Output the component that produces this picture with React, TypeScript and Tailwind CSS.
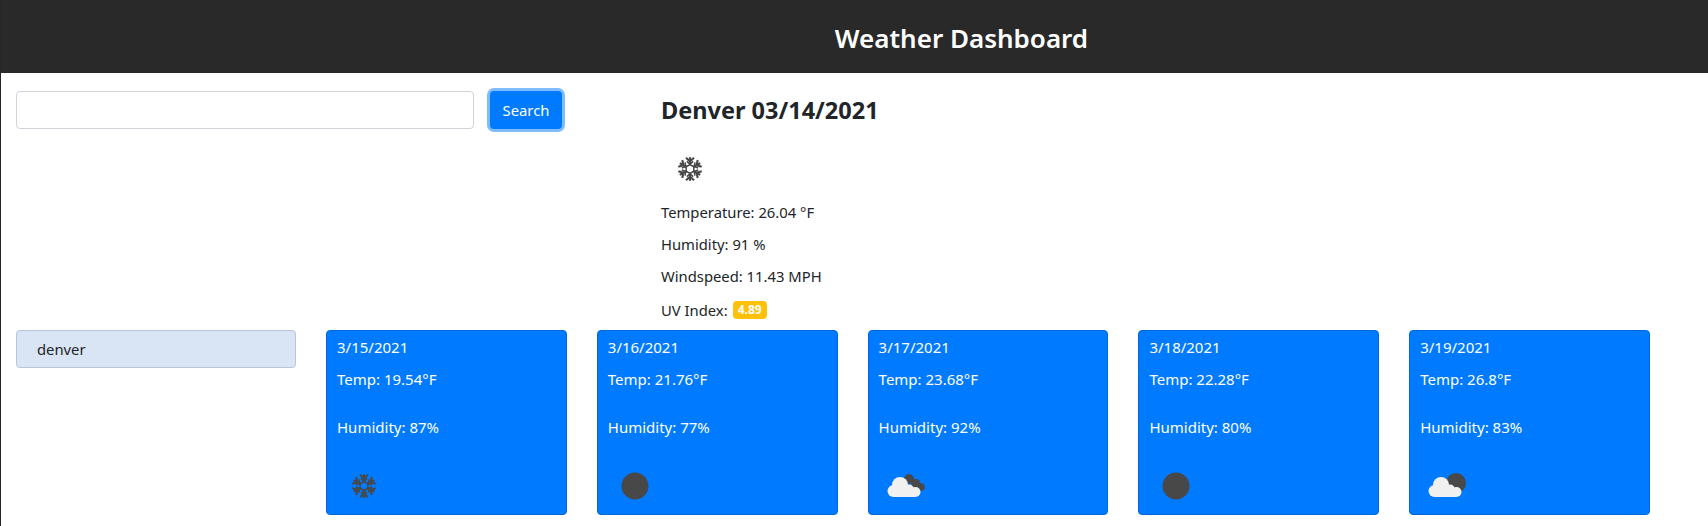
import React from 'react';

type IconKind = 'snow' | 'sun' | 'clouds' | 'partly';

interface Day {
  date: string;
  temp: string;
  humidity: string;
  icon: IconKind;
}

const days: Day[] = [
  { date: '3/15/2021', temp: '19.54', humidity: '87', icon: 'snow' },
  { date: '3/16/2021', temp: '21.76', humidity: '77', icon: 'sun' },
  { date: '3/17/2021', temp: '23.68', humidity: '92', icon: 'clouds' },
  { date: '3/18/2021', temp: '22.28', humidity: '80', icon: 'sun' },
  { date: '3/19/2021', temp: '26.8', humidity: '83', icon: 'partly' },
];

const Cloud = () => (
  <g fill="#f0f0f0">
    <circle cx="12.5" cy="30" r="6" />
    <circle cx="19" cy="24" r="8" />
    <circle cx="28" cy="28.5" r="5" />
    <circle cx="34.5" cy="31" r="5" />
    <rect x="12.5" y="29" width="22" height="7" />
  </g>
);

const WeatherIcon: React.FC<{ kind: IconKind }> = ({ kind }) => {
  if (kind === 'snow') {
    return (
      <svg viewBox="0 0 50 50" className="w-[50px] h-[50px]">
        <g stroke="#484848" strokeWidth="2.1" fill="none">
          <polygon points="25,20.6 28.8,22.8 28.8,27.2 25,29.4 21.2,27.2 21.2,22.8" strokeWidth="1.5" />
          {[0, 60, 120, 180, 240, 300].map((a) => (
            <g key={a} transform={`rotate(${a} 25 25)`}>
              <path d="M25 21 V13.2" />
              <path d="M21 13.8 L25 17.4 L29 13.8" />
              <path d="M21.8 17.4 L25 20.2 L28.2 17.4" strokeWidth="1.5" />
            </g>
          ))}
        </g>
      </svg>
    );
  }
  if (kind === 'sun') {
    return (
      <svg viewBox="0 0 50 50" className="w-[50px] h-[50px]">
        <circle cx="25" cy="25" r="13.5" fill="#484848" />
      </svg>
    );
  }
  if (kind === 'clouds') {
    return (
      <svg viewBox="0 0 50 50" className="w-[50px] h-[50px]">
        <circle cx="28" cy="18" r="5" fill="#484848" />
        <circle cx="35" cy="22.5" r="4.5" fill="#484848" />
        <circle cx="40" cy="26" r="3.8" fill="#484848" />
        <Cloud />
      </svg>
    );
  }
  return (
    <svg viewBox="0 0 50 50" className="w-[50px] h-[50px]">
      <circle cx="34" cy="22" r="10" fill="#484848" />
      <Cloud />
    </svg>
  );
};

const DayCard: React.FC<{ day: Day }> = ({ day }) => (
  <div className="h-[185px] rounded border border-[#0069d9] bg-[#007bff] text-white text-[15px] pl-[10px] pr-3 pt-[4px]">
    <div className="leading-6">{day.date}</div>
    <div className="leading-6 mt-2">Temp: {day.temp}°F</div>
    <div className="leading-6 mt-6">Humidity: {day.humidity}%</div>
    <div className="mt-[22px] ml-[2px]"><WeatherIcon kind={day.icon} /></div>
  </div>
);

export default function App() {
  return (
    <div className="min-h-[526px] bg-white border-l border-[#262626] text-[14.8px] text-[#212529] overflow-hidden font-['Noto_Sans',sans-serif]">
      <header className="h-[73px] bg-[#292929] flex items-center justify-center pl-[214px] pt-[3px]">
        <h1 className="text-[26px] font-semibold text-white">Weather Dashboard</h1>
      </header>

      <div className="flex pt-[18px] pl-[15px]">
        <div className="w-[645px] flex items-start gap-[16px] shrink-0">
          <input className="w-[458px] h-[38px] rounded border border-[#ced4da] bg-white" />
          <button className="h-[38px] w-[72px] rounded bg-[#007bff] text-white ring-[3px] ring-[#007bff]/50">Search</button>
        </div>
        <div>
          <h2 className="text-[23.5px] font-bold leading-[40px] -mt-[1px]">Denver 03/14/2021</h2>
          <div className="mt-[14px] ml-[4px]"><WeatherIcon kind="snow" /></div>
          <p className="leading-6 mt-[6px]">Temperature: 26.04 °F</p>
          <p className="leading-6 mt-2">Humidity: 91 %</p>
          <p className="leading-6 mt-2">Windspeed: 11.43 MPH</p>
          <p className="leading-6 mt-[10px] flex items-center gap-[5px]">
            UV Index:
            <span className="inline-block rounded bg-[#ffc107] text-white text-[12px] font-bold leading-none px-[5px] py-[3px]">4.89</span>
          </p>
        </div>
      </div>

      <div className="flex mt-[8px] pl-[15px]">
        <div className="w-[280px] shrink-0">
          <div className="h-[38px] rounded border border-[#b8c7dc] bg-[#d9e5f4] flex items-center pl-[20px]">denver</div>
        </div>
        <div className="ml-[30px] w-[1324px] grid grid-cols-5 gap-x-[30px]">
          {days.map((d) => (
            <DayCard key={d.date} day={d} />
          ))}
        </div>
      </div>
    </div>
  );
}
